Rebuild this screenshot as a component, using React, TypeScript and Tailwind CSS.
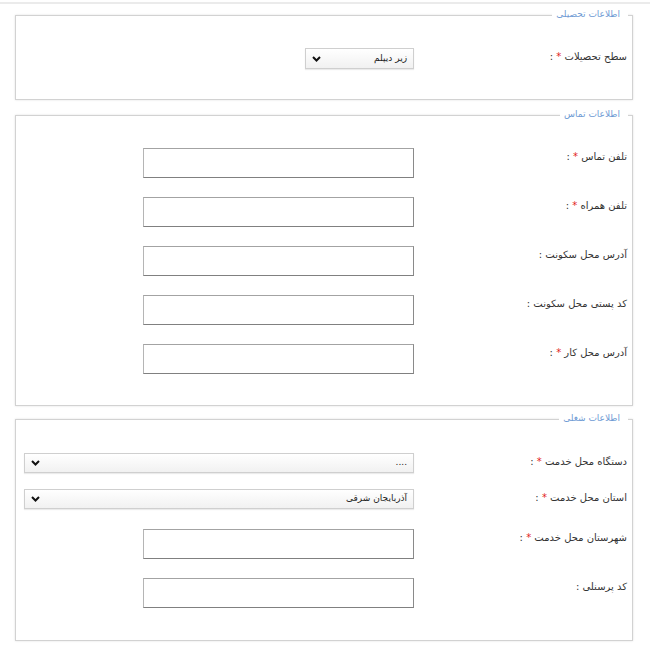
import type { ReactNode } from "react";

const font = { fontFamily: '"DejaVu Sans", Tahoma, sans-serif' };

function Legend({ children }: { children: ReactNode }) {
  return (
    <span className="absolute -top-[8px] right-[4px] bg-white pl-[4px] pr-[8px] text-[9px] leading-[12px] text-[#6f9bd4]">
      {children}
    </span>
  );
}

function Label({ text, required }: { text: string; required?: boolean }) {
  return (
    <div className="w-[218px] shrink-0 pr-[5px] pt-[2px] text-[10px] leading-[14px] text-[#333]">
      {text}
      {required && <span className="text-[#e2231a]"> *</span>}
      <span> :</span>
    </div>
  );
}

function TextBox() {
  return (
    <div className="h-[30px] w-[271px] border border-t-[#a3a3a3] border-r-[#8a8a8a] border-b-[#808080] border-l-[#b5b5b5] bg-white" />
  );
}

function Chevron() {
  return (
    <svg width="9" height="6" viewBox="0 0 9 6" className="shrink-0">
      <path d="M1 1 L4.5 4.5 L8 1" fill="none" stroke="#111" strokeWidth="2" />
    </svg>
  );
}

function Select({ value, wide }: { value: string; wide?: boolean }) {
  return (
    <div
      className={
        "flex items-center justify-between border border-[#cfcfcf] bg-gradient-to-b from-white to-[#f1f1f1] pl-[6px] pr-[6px] text-[9px] text-[#222] shadow-[0_1px_1px_rgba(0,0,0,0.08)] " +
        (wide ? "h-[20px] w-full" : "h-[21px] w-[109px]")
      }
    >
      <span>{value}</span>
      <Chevron />
    </div>
  );
}

function Row({ label, required, children, className = "" }: { label: string; required?: boolean; children: ReactNode; className?: string }) {
  return (
    <div className={"flex items-start " + className}>
      <Label text={label} required={required} />
      <div className="flex flex-1 justify-start pl-[8px]">{children}</div>
    </div>
  );
}

export default function App() {
  return (
    <div dir="rtl" style={font} className="h-[651px] w-[650px] overflow-hidden bg-white">
      <div className="mt-[2px] h-[2px] bg-[#ebebeb]" />
      <div className="pl-[15px] pr-[17px]">
        <div className="relative mt-[11px] border border-[#d2d2d2] pb-[30px] pt-[32px] shadow-[0_0_2px_rgba(0,0,0,0.12)]">
          <Legend>اطلاعات تحصیلی</Legend>
          <Row label="سطح تحصیلات" required>
            <Select value="زیر دیپلم" />
          </Row>
        </div>

        <div className="relative mt-[15px] border border-[#d2d2d2] pb-[31px] pt-[32px] shadow-[0_0_2px_rgba(0,0,0,0.12)]">
          <Legend>اطلاعات تماس</Legend>
          <div className="flex flex-col gap-[19px]">
            <Row label="تلفن تماس" required>
              <TextBox />
            </Row>
            <Row label="تلفن همراه" required>
              <TextBox />
            </Row>
            <Row label="آدرس محل سکونت">
              <TextBox />
            </Row>
            <Row label="کد پستی محل سکونت">
              <TextBox />
            </Row>
            <Row label="آدرس محل کار" required>
              <TextBox />
            </Row>
          </div>
        </div>

        <div className="relative mt-[13px] border border-[#d2d2d2] pb-[32px] pt-[33px] shadow-[0_0_2px_rgba(0,0,0,0.12)]">
          <Legend>اطلاعات شغلی</Legend>
          <Row label="دستگاه محل خدمت" required>
            <Select value="...." wide />
          </Row>
          <Row label="استان محل خدمت" required className="mt-[16px]">
            <Select value="آذربایجان شرقی" wide />
          </Row>
          <Row label="شهرستان محل خدمت" required className="mt-[20px]">
            <TextBox />
          </Row>
          <Row label="کد پرسنلی" className="mt-[19px]">
            <TextBox />
          </Row>
        </div>
      </div>
    </div>
  );
}
